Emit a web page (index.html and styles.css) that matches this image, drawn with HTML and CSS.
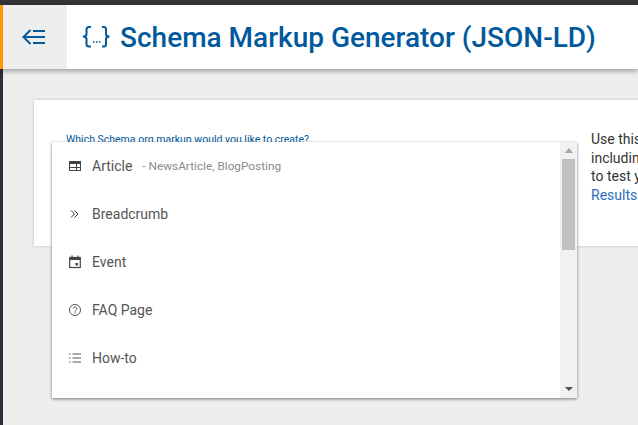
FILE: index.html
```html
<!DOCTYPE html>
<html lang="en">
<head>
    <meta charset="UTF-8">
    <meta name="viewport" content="width=device-width, initial-scale=1" />
    <title>Schema Markup Generator (JSON-LD)</title>
    <link rel="stylesheet" href="styles.css">
</head>
<body>
    <div class="topbar"></div>
    <div class="page">
        <header class="header">
            <div class="toggle">
                <svg width="24" height="24" viewBox="0 0 24 24" fill="none" stroke="#00599c" stroke-width="2">
                    <path d="M8.500 5 L1.500 12 L8.500 19"/>
                    <path d="M2 12 H23"/>
                    <path d="M11 6 H23"/>
                    <path d="M11 18 H23"/>
                </svg>
            </div>
            <svg class="logo" width="30" height="24" viewBox="0 0 30 24" fill="none" stroke="#00599c" stroke-width="2">
                <path d="M10 2 H8 Q5.500 2 5.500 4.500 V9 Q5.500 11.500 2 11.500 Q5.500 11.500 5.500 14 V19 Q5.500 21.500 8 21.500 H10"/>
                <path d="M21 2 H23 Q25 2 25 4.500 V9 Q25 11.500 28.500 11.500 Q25 11.500 25 14 V19 Q25 21.500 23 21.500 H21"/>
                <path d="M12 17 h1.500 M15 17 h1.500 M18 17 h1.500" stroke-width="1.500"/>
            </svg>
            <h1 class="title">Schema Markup Generator (JSON-LD)</h1>
        </header>
        <main class="content">
            <section class="card">
                <div class="form-col">
                    <label class="field-label">Which Schema.org markup would you like to create?</label>
                </div>
                <div class="help-col">
                    <div>Use this Schema.org generator to create markup,</div>
                    <div>including all of the required item properties, and</div>
                    <div>to test your markup with the Rich</div>
                    <div class="link">Results Test</div>
                </div>
            </section>
            <div class="dropdown">
                <ul class="options">
                    <li class="option">
                        <svg class="opt-icon" viewBox="0 0 14 14" fill="none" stroke="#444" stroke-width="1">
                            <rect x="1.500" y="2.500" width="11" height="9"/>
                            <path d="M1.500 4 H12.500" stroke-width="2"/>
                            <path d="M1.500 8.500 H12.500 M8.500 5 V11.500"/>
                        </svg>
                        <span>Article</span><span class="hint">- NewsArticle, BlogPosting</span>
                    </li>
                    <li class="option">
                        <svg class="opt-icon" viewBox="0 0 14 14" fill="none" stroke="#333" stroke-width="1">
                            <path d="M3 3.500 L6.500 7 L3 10.500"/>
                            <path d="M6.500 3.500 L10 7 L6.500 10.500"/>
                        </svg>
                        <span>Breadcrumb</span>
                    </li>
                    <li class="option">
                        <svg class="opt-icon" viewBox="0 0 14 14" fill="none" stroke="#444" stroke-width="1.200">
                            <rect x="1.700" y="2.500" width="10.600" height="10"/>
                            <path d="M1.700 4 H12.300" stroke-width="2"/>
                            <path d="M4 .500 V2.500 M10 .500 V2.500"/>
                            <rect x="7.500" y="8" width="2.500" height="2.500" fill="#444" stroke="none"/>
                        </svg>
                        <span>Event</span>
                    </li>
                    <li class="option">
                        <svg class="opt-icon" viewBox="0 0 14 14" fill="none" stroke="#555" stroke-width="1">
                            <circle cx="7" cy="7" r="5.500"/>
                            <path d="M5.200 5.700 A1.800 1.800 0 1 1 8 7.200 Q7 7.800 7 8.600"/>
                            <path d="M7 9.500 V10.700"/>
                        </svg>
                        <span>FAQ Page</span>
                    </li>
                    <li class="option">
                        <svg class="opt-icon" viewBox="0 0 14 14" fill="none" stroke="#555" stroke-width="1">
                            <path d="M4.500 3 H13 M4.500 7 H13 M4.500 11 H13"/>
                            <path d="M1 3 H3 M1 7 H3 M1 11 H3" stroke-dasharray="1 .500"/>
                        </svg>
                        <span>How-to</span>
                    </li>
                </ul>
                <div class="scrollbar">
                    <div class="arrow-up"></div>
                    <div class="track"><div class="thumb"></div></div>
                    <div class="arrow-down"></div>
                </div>
            </div>
        </main>
    </div>
</body>
</html>
```

FILE: styles.css
```css
html {
    height: 100%;
    overflow: hidden;
}
body {
    height: 100%;
    margin: 0;
    padding: 0;
    display: flex;
    flex-direction: column;
    background-color: #2b2e38;
    font-family: Roboto, sans-serif;
    overflow: hidden;
}
.topbar {
    height: 5px;
    flex-shrink: 0;
    background-color: #333436;
}
.page {
    flex-grow: 1;
    display: flex;
    flex-direction: column;
    min-height: 0;
}
.header {
    height: 64px;
    flex-shrink: 0;
    display: flex;
    align-items: center;
    background-color: white;
    border-left: 3px solid #ff9800;
    box-shadow: 0 2px 5px rgba(0, 0, 0, 0.35);
    position: relative;
    z-index: 2;
}
.toggle {
    width: 64px;
    height: 64px;
    display: flex;
    align-items: center;
    justify-content: center;
    background-color: #eeeeee;
}
.toggle svg {
    margin-right: 2px;
}
.logo {
    margin-left: 14px;
}
.title {
    margin: 0 0 0 9px;
    font-size: 28px;
    font-weight: 500;
    color: #00599c;
    white-space: nowrap;
}
.content {
    flex-grow: 1;
    position: relative;
    margin-left: 3px;
    padding: 31px 0 0 31px;
    background-color: #eeeeee;
    min-height: 0;
}
.card {
    width: 700px;
    height: 146px;
    box-sizing: border-box;
    display: flex;
    background-color: white;
    box-shadow: 0 0 3px rgba(0, 0, 0, 0.2);
}
.form-col {
    width: 557px;
    flex-shrink: 0;
    padding: 33px 0 0 32px;
    box-sizing: border-box;
}
.field-label {
    display: block;
    font-size: 10.500px;
    color: #00599c;
    white-space: nowrap;
}
.help-col {
    padding-top: 30px;
    font-size: 14px;
    line-height: 18.700px;
    color: #333;
    white-space: nowrap;
}
.link {
    color: #2a6ebb;
}
.dropdown {
    position: absolute;
    left: 49px;
    top: 73px;
    width: 525px;
    height: 256px;
    display: flex;
    background-color: white;
    box-shadow: 0 1px 3px rgba(0, 0, 0, 0.5);
    z-index: 3;
}
.options {
    flex-grow: 1;
    margin: 0;
    padding: 0;
    list-style: none;
    overflow: hidden;
}
.option {
    height: 48px;
    display: flex;
    align-items: center;
    padding-left: 16px;
    font-size: 14px;
    color: #555;
}
.opt-icon {
    width: 14px;
    height: 14px;
    margin-right: 10px;
    flex-shrink: 0;
}
.hint {
    margin-left: 10px;
    font-size: 11.800px;
    color: #8a8a8a;
}
.scrollbar {
    width: 17px;
    flex-shrink: 0;
    display: flex;
    flex-direction: column;
    align-items: center;
    background-color: #f1f1f1;
}
.arrow-up, .arrow-down {
    width: 0;
    height: 0;
    border-left: 4px solid transparent;
    border-right: 4px solid transparent;
}
.arrow-up {
    margin: 6px 0;
    border-bottom: 5px solid #a3a3a3;
}
.arrow-down {
    margin: 0 0 7px;
    border-top: 4px solid #505050;
}
.track {
    flex-grow: 1;
    width: 100%;
}
.thumb {
    height: 91px;
    margin: 0 2px;
    background-color: #c1c1c1;
}
```
